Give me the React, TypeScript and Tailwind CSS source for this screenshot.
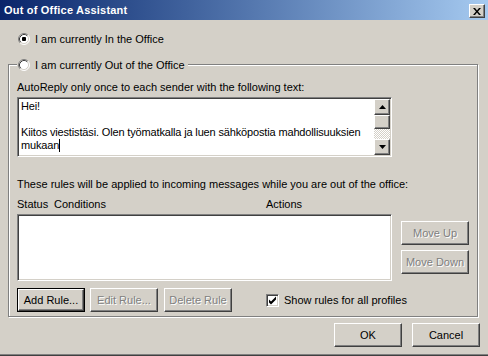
import React from 'react'

const raised =
  'border border-t-white border-l-white border-r-[#404040] border-b-[#404040] shadow-[inset_-1px_-1px_0_#808080] bg-[#d4d0c8]'
const sunken =
  'border border-t-[#808080] border-l-[#808080] border-r-white border-b-white shadow-[inset_1px_1px_0_#404040,inset_-1px_-1px_0_#d4d0c8] bg-white'
const disabledText = 'text-[#808080] [text-shadow:1px_1px_0_#fff]'

function Radio({ checked }: { checked?: boolean }) {
  return (
    <svg width="12" height="12" viewBox="0 0 12 12" className="shrink-0">
      <circle cx="6" cy="6" r="5" fill="#fff" />
      <path d="M2.11 9.89 A5.5 5.5 0 0 1 9.89 2.11" fill="none" stroke="#808080" />
      <path d="M9.89 2.11 A5.5 5.5 0 0 1 2.11 9.89" fill="none" stroke="#fff" />
      <path d="M2.82 9.18 A4.5 4.5 0 0 1 9.18 2.82" fill="none" stroke="#404040" />
      <path d="M9.18 2.82 A4.5 4.5 0 0 1 2.82 9.18" fill="none" stroke="#d4d0c8" />
      {checked && <rect x="4" y="4" width="4" height="4" rx="1" fill="#000" />}
    </svg>
  )
}

function Checkbox() {
  return (
    <div className={`w-[13px] h-[13px] ${sunken} shrink-0 relative`}>
      <svg width="13" height="13" viewBox="0 0 13 13" className="absolute -left-px -top-px">
        <path d="M3 5v3l2 2 5-5v-3l-5 5z" fill="#000" transform="translate(0 0.5)" />
      </svg>
    </div>
  )
}

function Button({
  label,
  w = 'w-[68px]',
  disabled,
  isDefault,
}: {
  label: string
  w?: string
  disabled?: boolean
  isDefault?: boolean
}) {
  if (isDefault) {
    return (
      <div className={`${w} h-[24px] border border-black flex`}>
        <div className={`flex-1 ${raised} flex items-center justify-center`}>{label}</div>
      </div>
    )
  }
  return (
    <div className={`${w} h-[24px] ${raised} flex items-center justify-center ${disabled ? disabledText : ''}`}>
      {label}
    </div>
  )
}

function ScrollBar() {
  return (
    <div className="w-[16px] h-full flex flex-col shrink-0">
      <div className={`h-[16px] ${raised} flex items-center justify-center`}>
        <svg width="7" height="4" viewBox="0 0 7 4">
          <path d="M3.5 0 L7 4 L0 4 Z" fill="#000" />
        </svg>
      </div>
      <div className={`h-[14px] ${raised}`} />
      <div className="flex-1 bg-[repeating-conic-gradient(#fff_0_25%,#d4d0c8_0_50%)] bg-[length:2px_2px]" />
      <div className={`h-[16px] ${raised} flex items-center justify-center`}>
        <svg width="7" height="4" viewBox="0 0 7 4">
          <path d="M0 0 L7 0 L3.5 4 Z" fill="#000" />
        </svg>
      </div>
    </div>
  )
}

export default function App() {
  return (
    <div className="w-[488px] h-[356px] bg-[#d4d0c8] flex flex-col overflow-hidden text-[11px] text-black font-['Liberation_Sans',Arial,sans-serif] select-none">
      {/* title bar */}
      <div className="h-[20px] shrink-0 flex items-start bg-gradient-to-r from-[#0a246a] to-[#a6caf0]">
        <div className="pl-[4px] leading-[20px] text-white font-bold tracking-[0.2px]">Out of Office Assistant</div>
        <div className={`ml-auto mr-[3px] mt-[4px] w-[16px] h-[14px] ${raised} flex items-center justify-center`}>
          <svg width="8" height="7" viewBox="0 0 8 7">
            <path d="M0 0h2l2 2.5 2-2.5h2l-3 3.5 3 3.5h-2l-2-2.5-2 2.5h-2l3-3.5z" fill="#000" />
          </svg>
        </div>
      </div>

      <div className="flex-1 flex flex-col px-[8px]">
        <div className="mt-[13px] ml-[10px] h-[12px] flex items-center gap-[5px] leading-[13px]">
          <Radio checked />
          <span>I am currently In the Office</span>
        </div>

        {/* group box */}
        <div className="relative mt-[19px] w-[470px] h-[253px] shrink-0 border border-[#808080] shadow-[inset_1px_1px_0_#fff,1px_1px_0_#fff] pl-[8px] flex flex-col">
          <div className="absolute left-[8px] -top-[6px] h-[12px] pl-px pr-[3px] bg-[#d4d0c8] flex items-center gap-[5px] leading-[13px]">
            <Radio />
            <span>I am currently Out of the Office</span>
          </div>

          <div className="mt-[16px] leading-[13px]">AutoReply only once to each sender with the following text:</div>

          <div className={`mt-[3px] w-[375px] h-[60px] ${sunken} p-[1px] flex`}>
            <div className="flex-1 pl-[2px] pt-[1px] leading-[13px] overflow-hidden tracking-[-0.15px] whitespace-nowrap">
              <div>Hei!</div>
              <div className="h-[13px]" />
              <div>Kiitos viestistäsi. Olen työmatkalla ja luen sähköpostia mahdollisuuksien</div>
              <div className="flex items-center">
                mukaan<span className="inline-block w-px h-[13px] bg-black" />
              </div>
            </div>
            <ScrollBar />
          </div>

          <div className="mt-[21px] leading-[13px]">These rules will be applied to incoming messages while you are out of the office:</div>

          <div className="mt-[7px] leading-[13px] flex">
            <span className="w-[37px]">Status</span>
            <span className="w-[212px]">Conditions</span>
            <span>Actions</span>
          </div>

          <div className="mt-[3px] flex items-start">
            <div className={`w-[375px] h-[67px] ${sunken}`} />
            <div className="ml-[9px] mt-[7px] flex flex-col gap-[5px]">
              <Button label="Move Up" disabled />
              <Button label="Move Down" disabled />
            </div>
          </div>

          <div className="mt-[7px] flex items-center">
            <Button label="Add Rule..." isDefault />
            <div className="ml-[5px]">
              <Button label="Edit Rule..." disabled />
            </div>
            <div className="ml-[6px]">
              <Button label="Delete Rule" disabled />
            </div>
            <div className="ml-[34px] flex items-center gap-[5px]">
              <Checkbox />
              <span>Show rules for all profiles</span>
            </div>
          </div>
        </div>

        <div className="mt-[6px] flex justify-end gap-[10px]">
          <Button label="OK" />
          <Button label="Cancel" />
        </div>
      </div>

      <div className="h-px bg-[#808080] shrink-0" />
      <div className="h-px bg-[#404040] shrink-0" />
    </div>
  )
}
